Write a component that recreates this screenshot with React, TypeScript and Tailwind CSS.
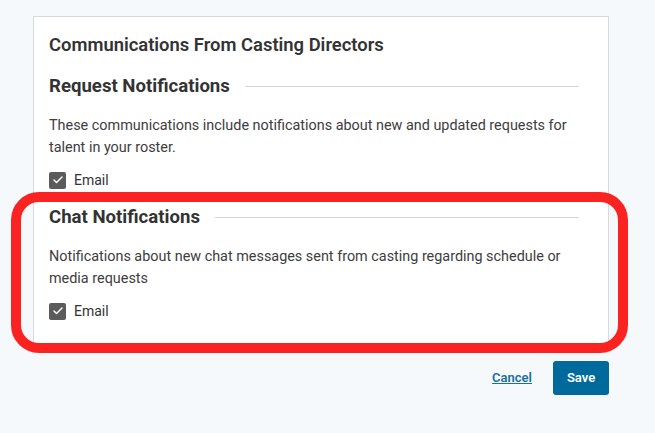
import { Check } from 'lucide-react'

type SectionProps = {
  title: string
  text: string
}

function Section({ title, text }: SectionProps) {
  return (
    <div>
      <div className="flex items-center h-[24px] pr-[14px]">
        <h3 className="text-[18.6px] font-bold text-[#333] leading-[24px] whitespace-nowrap">{title}</h3>
        <div className="flex-1 ml-[15px] h-px bg-[#d4d4d4]" />
      </div>
      <p className="mt-[17px] text-[14.4px] leading-[22px] text-[#3d3d3d] pr-[10px]">{text}</p>
      <label className="mt-[12px] flex items-center gap-[8px] h-[18px]">
        <span className="w-[17px] h-[17px] rounded-[2px] bg-[#5b5b5b] flex items-center justify-center">
          <Check className="w-[12px] h-[12px] text-white" strokeWidth={3} />
        </span>
        <span className="text-[14px] text-[#333]">Email</span>
      </label>
    </div>
  )
}

export default function App() {
  return (
    <div
      className="relative w-[655px] h-[433px] bg-[#f6f9fc] pt-[16px] pl-[33px] overflow-hidden"
      style={{ fontFamily: 'Roboto, "Noto Sans", sans-serif' }}
    >
      <div className="w-[576px] h-[330px] bg-white border border-[#d6d9de] px-[15px] pt-[16px]">
        <h2 className="text-[18.4px] font-semibold leading-[24px] text-[#333]">
          Communications From Casting Directors
        </h2>
        <div className="mt-[17px]">
          <Section
            title="Request Notifications"
            text="These communications include notifications about new and updated requests for talent in your roster."
          />
        </div>
        <div className="mt-[16px]">
          <Section
            title="Chat Notifications"
            text="Notifications about new chat messages sent from casting regarding schedule or media requests"
          />
        </div>
      </div>

      <div className="flex items-center justify-end w-[576px] mt-[15px] gap-[21px]">
        <a href="#" className="text-[13px] font-semibold text-[#1d6fa0] underline">
          Cancel
        </a>
        <button className="w-[56px] h-[34px] rounded-[3px] bg-[#016a9d] text-white text-[13px] font-semibold">
          Save
        </button>
      </div>

      <div className="absolute left-[11px] top-[192px] w-[617px] h-[161px] border-[10px] border-[#fb2222] rounded-[28px] pointer-events-none" />
    </div>
  )
}
